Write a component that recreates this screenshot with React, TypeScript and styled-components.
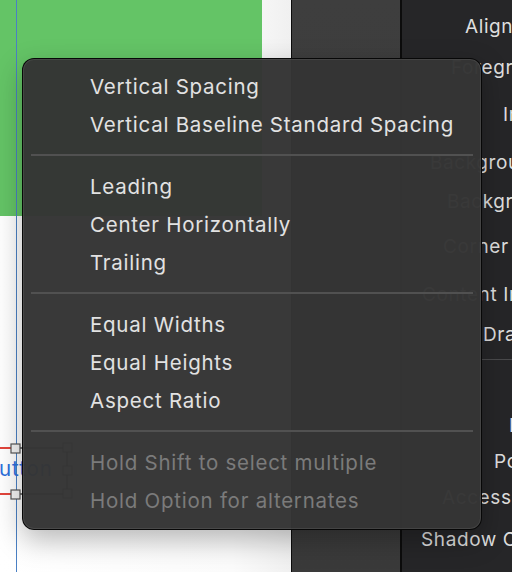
import React from 'react';
import styled, { createGlobalStyle } from 'styled-components';

const GlobalStyle = createGlobalStyle`
  html, body {
    margin: 0;
    padding: 0;
    width: 512px;
    height: 572px;
    overflow: hidden;
    background: #252527;
  }
`;

const Window = styled.div`
  position: relative;
  display: flex;
  width: 512px;
  height: 572px;
  overflow: hidden;
  font-family: Inter, 'Noto Sans', sans-serif;
`;

const Canvas = styled.div`
  position: relative;
  width: 291px;
  flex-shrink: 0;
  background: linear-gradient(90deg, #ffffff 0%, #fbfbfb 80%, #f0f0f0 100%);
  overflow: hidden;
`;

const GreenView = styled.div`
  width: 262px;
  height: 216px;
  background: #64c466;
`;

const Guide = styled.div`
  position: absolute;
  left: 16px;
  top: 0;
  bottom: 0;
  width: 1px;
  background: #4a80c4;
`;

const ButtonLabel = styled.span`
  position: absolute;
  left: -1px;
  top: 455px;
  font-size: 20.5px;
  line-height: 28px;
  letter-spacing: 0.9px;
  color: #2d6fdc;
`;

const Handles = styled.svg`
  position: absolute;
  left: 0;
  top: 436px;
`;

const Divider = styled.div<{ $w: number }>`
  width: ${({ $w }) => $w}px;
  flex-shrink: 0;
  background: #0c0c0c;
`;

const MiddlePanel = styled.div`
  width: 108px;
  flex-shrink: 0;
  background: linear-gradient(180deg, #3e3e3e 0%, #3a3a3a 100%);
`;

const Inspector = styled.div`
  flex: 1;
  display: flex;
  flex-direction: column;
  background: #262628;
  overflow: hidden;
`;

const InspectorRow = styled.div<{ $indent: number; $gap: number }>`
  height: 28px;
  margin-top: ${({ $gap }) => $gap}px;
  padding-left: ${({ $indent }) => $indent}px;
  font-size: 19px;
  line-height: 28px;
  letter-spacing: 0.6px;
  color: #dedede;
  white-space: nowrap;
  overflow: hidden;
`;

const InspectorRule = styled.div`
  height: 1px;
  margin: 10px 0 0 80px;
  background: #4a4a4c;
`;

const Menu = styled.div`
  position: absolute;
  left: 22px;
  top: 58px;
  width: 460px;
  box-sizing: border-box;
  padding: 8px 0 10px;
  border-radius: 12px;
  background: rgba(52, 52, 52, 0.975);
  border: 1px solid rgba(0, 0, 0, 0.85);
  box-shadow: inset 0 0 0 1px rgba(255, 255, 255, 0.08), 0 10px 28px rgba(0, 0, 0, 0.28);
`;

const MenuItem = styled.div<{ $disabled?: boolean }>`
  height: 38px;
  padding-left: 67px;
  display: flex;
  align-items: center;
  font-size: 20.5px;
  letter-spacing: 0.75px;
  color: ${({ $disabled }) => ($disabled ? '#7b7b7b' : '#e2e2e2')};
  white-space: nowrap;
`;

const MenuSeparator = styled.div`
  height: 24px;
  display: flex;
  align-items: center;
  padding: 0 8px;

  &::after {
    content: '';
    flex: 1;
    height: 2px;
    background: #515151;
  }
`;

const inspectorRows = [
  { label: 'Alignment', indent: 63, gap: 13 },
  { label: 'Foreground', indent: 49, gap: 13 },
  { label: 'Indicator', indent: 101, gap: 19 },
  { label: 'Background', indent: 28, gap: 20 },
  { label: 'Background', indent: 45, gap: 11 },
  { label: 'Corner Style', indent: 41, gap: 17 },
  { label: 'Content Insets', indent: 20, gap: 20 },
  { label: 'Drag', indent: 81, gap: 12 },
];

const inspectorRowsBelow = [
  { label: 'Image', indent: 107, gap: 52 },
  { label: 'Pointer', indent: 92, gap: 8 },
  { label: 'Accessibility', indent: 40, gap: 8 },
  { label: 'Shadow Color', indent: 19, gap: 14 },
];

type Entry = { kind: 'item'; label: string; disabled?: boolean } | { kind: 'sep' };

const menuEntries: Entry[] = [
  { kind: 'item', label: 'Vertical Spacing' },
  { kind: 'item', label: 'Vertical Baseline Standard Spacing' },
  { kind: 'sep' },
  { kind: 'item', label: 'Leading' },
  { kind: 'item', label: 'Center Horizontally' },
  { kind: 'item', label: 'Trailing' },
  { kind: 'sep' },
  { kind: 'item', label: 'Equal Widths' },
  { kind: 'item', label: 'Equal Heights' },
  { kind: 'item', label: 'Aspect Ratio' },
  { kind: 'sep' },
  { kind: 'item', label: 'Hold Shift to select multiple', disabled: true },
  { kind: 'item', label: 'Hold Option for alternates', disabled: true },
];

const SelectionHandles = () => (
  <Handles width="80" height="70" viewBox="0 0 80 70">
    <line x1="0" y1="12" x2="11" y2="12" stroke="#e2453c" strokeWidth="2" />
    <line x1="0" y1="58" x2="11" y2="58" stroke="#e2453c" strokeWidth="2" />
    <line x1="20" y1="12" x2="63" y2="12" stroke="#444" strokeWidth="1.5" />
    <line x1="20" y1="58" x2="63" y2="58" stroke="#444" strokeWidth="1.5" />
    <line x1="67" y1="16" x2="67" y2="54" stroke="#444" strokeWidth="1.5" />
    <rect x="11" y="8" width="9" height="9" fill="#f4f4f4" stroke="#555" strokeWidth="1.2" />
    <rect x="11" y="54" width="9" height="9" fill="#f4f4f4" stroke="#555" strokeWidth="1.2" />
    <rect x="63" y="7" width="9" height="9" fill="#f4f4f4" stroke="#555" strokeWidth="1.2" />
    <rect x="63" y="30" width="9" height="9" fill="#f4f4f4" stroke="#555" strokeWidth="1.2" />
    <rect x="63" y="53" width="9" height="9" fill="#f4f4f4" stroke="#555" strokeWidth="1.2" />
  </Handles>
);

const App: React.FC = () => (
  <>
    <GlobalStyle />
    <Window>
      <Canvas>
        <GreenView />
        <Guide />
        <ButtonLabel>utton</ButtonLabel>
        <SelectionHandles />
      </Canvas>
      <Divider $w={1} />
      <MiddlePanel />
      <Divider $w={2} />
      <Inspector>
        {inspectorRows.map((row, i) => (
          <InspectorRow key={i} $indent={row.indent} $gap={row.gap}>
            {row.label}
          </InspectorRow>
        ))}
        <InspectorRule />
        {inspectorRowsBelow.map((row, i) => (
          <InspectorRow key={i} $indent={row.indent} $gap={row.gap}>
            {row.label}
          </InspectorRow>
        ))}
      </Inspector>
      <Menu>
        {menuEntries.map((entry, i) =>
          entry.kind === 'sep' ? (
            <MenuSeparator key={i} />
          ) : (
            <MenuItem key={i} $disabled={entry.disabled}>
              {entry.label}
            </MenuItem>
          ),
        )}
      </Menu>
    </Window>
  </>
);

export default App;
